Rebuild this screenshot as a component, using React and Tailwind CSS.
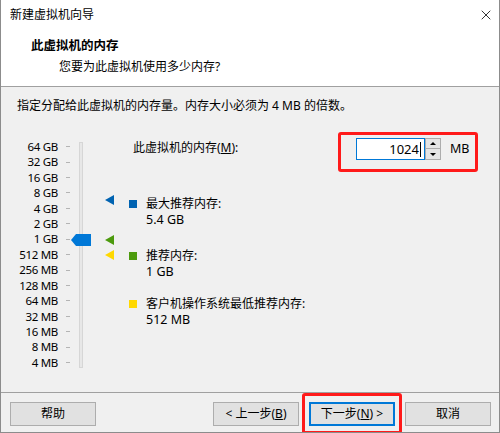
import { X } from "lucide-react";

const scale = [
  "64 GB", "32 GB", "16 GB", "8 GB", "4 GB", "2 GB", "1 GB", "512 MB",
  "256 MB", "128 MB", "64 MB", "32 MB", "16 MB", "8 MB", "4 MB",
];

function Arrow({ color, top }) {
  return (
    <div
      className="absolute left-[104px] w-0 h-0 border-y-[5px] border-y-transparent border-r-[9px]"
      style={{ top: top, borderRightColor: color }}
    />
  );
}

function Btn({ children, primary }) {
  return (
    <button
      className={
        "h-[24px] w-[86px] bg-[#e1e1e1] flex items-center justify-center " +
        (primary ? "border-2 border-[#0078d7]" : "border border-[#adadad]")
      }
    >
      {children}
    </button>
  );
}

export default function App() {
  return (
    <div className="w-[500px] h-[433px] flex flex-col bg-[#f0f0f0] border-x border-b border-[#8c8c8c] text-[12px] text-black font-['Noto_Sans','Noto_Sans_CJK_SC',sans-serif] leading-none overflow-hidden">
      {/* title + header */}
      <div className="bg-white h-[87px] border-b border-[#a0a0a0] flex flex-col">
        <div className="h-[30px] flex items-center pl-[9px] pr-[5px]">
          <span className="text-[12px]">新建虚拟机向导</span>
          <X className="ml-auto w-[16px] h-[16px]" strokeWidth={1.2} />
        </div>
        <div className="pl-[30px] pt-[10px] font-bold text-[12.5px]">此虚拟机的内存</div>
        <div className="pl-[58px] pt-[8px]">您要为此虚拟机使用多少内存?</div>
      </div>

      {/* body */}
      <div className="flex-1 flex flex-col">
        <div className="pl-[16px] pt-[13px]">指定分配给此虚拟机的内存量。内存大小必须为 4 MB 的倍数。</div>

        <div className="flex mt-[20px]">
          {/* slider */}
          <div className="relative w-[125px] h-[240px]">
            <div className="absolute left-0 top-[7px] flex flex-col">
              {scale.map((s) => (
                <div key={s} className="h-[15.43px] flex items-center">
                  <span className="w-[57px] text-right text-[11.5px] tracking-[-0.3px]">{s}</span>
                  <span className="ml-[8px] w-[4px] h-px bg-[#b4b4b4]" />
                </div>
              ))}
            </div>
            <div className="absolute left-[78px] top-[10px] w-[4px] h-[226px] bg-[#e7e7e7] border border-[#d6d6d6]" />
            <div className="absolute left-[70px] top-[102px] flex items-center">
              <div className="w-0 h-0 border-y-[6px] border-y-transparent border-r-[5px] border-r-[#0078d7]" />
              <div className="w-[15px] h-[12px] bg-[#0078d7]" />
            </div>
            <Arrow color="#0063b1" top={63} />
            <Arrow color="#4c9a0d" top={103} />
            <Arrow color="#ffd800" top={118} />
          </div>

          {/* right content */}
          <div className="flex-1 flex flex-col pl-[5px] pr-[21px]">
            <div className="flex items-start">
              <div className="mt-[10px] ml-[2px]">
                此虚拟机的内存(<span className="underline">M</span>):
              </div>
              <div className="ml-auto w-[140px] h-[40px] border-[3px] border-[#ff1a1a] rounded-[3px] flex items-start pt-[3px] pl-[15px]">
                <div className="w-[69px] h-[22px] bg-white border border-[#0078d7] flex items-center justify-end pr-[3px] text-[13px]">
                  1024<span className="w-px h-[15px] bg-black ml-px" />
                </div>
                <div className="flex flex-col w-[16px] h-[22px]">
                  <div className="h-[11px] bg-[#e5e5e5] border border-[#adadad] flex items-center justify-center">
                    <div className="w-0 h-0 border-x-[3px] border-x-transparent border-b-[3px] border-b-black" />
                  </div>
                  <div className="h-[11px] bg-[#e5e5e5] border border-[#adadad] border-t-0 flex items-center justify-center">
                    <div className="w-0 h-0 border-x-[3px] border-x-transparent border-t-[3px] border-t-black" />
                  </div>
                </div>
                <span className="ml-[9px] mt-[5px] text-[12.5px]">MB</span>
              </div>
            </div>

            <div className="flex flex-col gap-[20px] mt-[26px] ml-[-2px]">
              <div className="flex">
                <div className="w-[8px] h-[8px] bg-[#0063b1] mt-[2px]" />
                <div className="ml-[9px] flex flex-col gap-[4px]">
                  <span>最大推荐内存:</span>
                  <span className="text-[12.5px]">5.4 GB</span>
                </div>
              </div>
              <div className="flex mt-[3px]">
                <div className="w-[8px] h-[8px] bg-[#4c9a0d] mt-[2px]" />
                <div className="ml-[9px] flex flex-col gap-[4px]">
                  <span>推荐内存:</span>
                  <span className="text-[12.5px]">1 GB</span>
                </div>
              </div>
              <div className="flex">
                <div className="w-[8px] h-[8px] bg-[#ffd800] mt-[2px]" />
                <div className="ml-[9px] flex flex-col gap-[4px]">
                  <span>客户机操作系统最低推荐内存:</span>
                  <span className="text-[12.5px]">512 MB</span>
                </div>
              </div>
            </div>
          </div>
        </div>
      </div>

      {/* footer */}
      <div className="h-[40px] border-t border-[#a0a0a0] flex items-center pl-[9px] pr-[8px] pt-[2px]">
        <Btn>帮助</Btn>
        <div className="ml-auto flex items-center">
          <Btn>&lt; 上一步(<span className="underline">B</span>)</Btn>
          <div className="ml-[3px] p-[4px] border-[3px] border-[#ff1a1a] rounded-[3px] -my-[8px] h-[41px] flex items-center">
            <Btn primary>下一步(<span className="underline">N</span>) &gt;</Btn>
          </div>
          <div className="ml-[3px]">
            <Btn>取消</Btn>
          </div>
        </div>
      </div>
    </div>
  );
}
